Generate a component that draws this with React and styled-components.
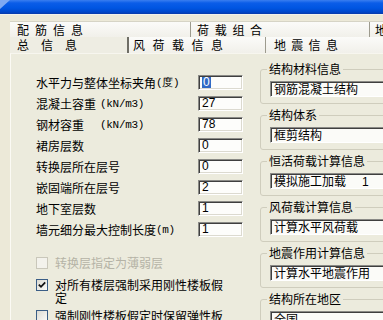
import React from 'react';
import styled, { createGlobalStyle } from 'styled-components';

const Global = createGlobalStyle`
  html, body { margin: 0; padding: 0; background: #ece9d8; overflow: hidden; }
  body {
    font-family: "Noto Sans CJK SC", "Noto Sans", sans-serif;
    font-size: 12px;
    color: #000;
  }
  * { box-sizing: border-box; }
`;

const Window = styled.div`
  width: 383px;
  height: 320px;
  overflow: hidden;
  display: flex;
  flex-direction: column;
  background: #ece9d8;
`;

const TitleBar = styled.div`
  flex: none;
  height: 15px;
  position: relative;
  background: linear-gradient(#3a7ef0 0, #0b5de8 3px, #0055e2 8px, #0047ca 12px, #0a3aa8 14px);
  border-bottom: 1px solid #f4f2ea;
  &::before {
    content: "";
    position: absolute;
    left: 0;
    top: 0;
    width: 10px;
    height: 9px;
    background: #7fa9f2;
    clip-path: polygon(0 0, 100% 0, 0 100%);
  }
`;

const Body = styled.div`
  flex: 1;
  min-height: 0;
  display: flex;
  flex-direction: column;
  padding: 6px 0 0 10px;
`;

const TabRow = styled.div`
  flex: none;
  display: flex;
  height: 16px;
  background: linear-gradient(#fbfbf9, #f1f0ea);
  border-top: ${p => (p.$top ? '1px solid #d6d4c6' : 'none')};
`;

const Tab = styled.div`
  flex: ${p => (p.$w ? 'none' : '1')};
  width: ${p => (p.$w ? `${p.$w}px` : 'auto')};
  padding-left: ${p => p.$pad}px;
  letter-spacing: ${p => p.$ls}px;
  line-height: 16px;
  white-space: nowrap;
  overflow: hidden;
  border-right: ${p => (p.$strong ? '2px solid #6f6e66' : '1px solid #9d9b8e')};
  background: ${p => (p.$active ? '#eeede3' : 'transparent')};
  &:last-child { border-right: none; }
`;

const Panel = styled.div`
  flex: 1;
  min-height: 0;
  display: flex;
  background: #ecebdd;
  border-left: 1px solid #fbfaf4;
  border-top: 1px solid #f7f6ef;
`;

const LeftCol = styled.div`
  flex: none;
  display: flex;
  flex-direction: column;
  padding: 21px 0 0 25px;
`;

const FormGrid = styled.div`
  display: grid;
  grid-template-columns: 162px 45px;
  grid-auto-rows: 21px;
`;

const Label = styled.div`
  display: flex;
  align-items: center;
  height: 15px;
  white-space: nowrap;
`;

const Name = styled.span`
  display: inline-block;
  min-width: ${p => (p.$min ? `${p.$min}px` : '0')};
`;

const Unit = styled.span`
  font-family: "Liberation Mono", monospace;
  font-size: 11px;
  letter-spacing: -0.3px;
`;

const Input = styled.div`
  height: 15px;
  background: #fdfdfb;
  border: 1px solid;
  border-color: #8a8a86 #ffffff #ffffff #8a8a86;
  box-shadow: inset 1px 1px 0 #3f3f3f, inset -1px -1px 0 #dcdad0;
  font-family: "Liberation Sans", Arial, sans-serif;
  font-size: 12px;
  line-height: 13px;
  padding-left: 3px;
`;

const Selected = styled.span`
  display: inline-block;
  background: #316ac5;
  color: #fff;
  padding: 0 1px;
  line-height: 11px;
  margin-top: 1px;
`;

const Checks = styled.div`
  margin-top: 8px;
  display: flex;
  flex-direction: column;
`;

const CheckRow = styled.div`
  display: flex;
  align-items: flex-start;
  min-height: 22px;
  padding-top: 5px;
  gap: 7px;
  color: ${p => (p.$disabled ? '#b5b3a6' : '#000')};
`;

const Box = styled.span`
  flex: none;
  width: 12px;
  height: 12px;
  margin-top: 1px;
  border: 1px solid ${p => (p.$disabled ? '#c9c7ba' : '#3b5e86')};
  background: ${p => (p.$disabled ? '#f3f2ec' : 'linear-gradient(135deg, #dcdbd3, #fbfbf8)')};
  display: flex;
  align-items: center;
  justify-content: center;
`;

const CheckText = styled.span`
  width: 172px;
  line-height: 13px;
`;

const RightCol = styled.div`
  flex: none;
  width: 160px;
  margin-left: 17px;
  padding-top: 9px;
  display: flex;
  flex-direction: column;
  gap: 5px;
`;

const Group = styled.fieldset`
  margin: 0;
  padding: 0 0 6px 9px;
  border: 1px solid #cfcdbd;
  border-radius: 3px;
  min-width: 0;
`;

const Legend = styled.legend`
  padding: 0 2px;
  margin-left: -3px;
  line-height: 12px;
  height: 12px;
  white-space: nowrap;
`;

const Field = styled.div`
  margin-top: 6px;
  height: 16px;
  background: #fbfbf8;
  border: 1px solid;
  border-color: #8a8a86 #ffffff #ffffff #8a8a86;
  box-shadow: inset 1px 1px 0 #3f3f3f;
  padding-left: 3px;
  line-height: 14px;
  white-space: nowrap;
  overflow: hidden;
`;

const Extra = styled.span`
  margin-left: 16px;
  font-family: "Liberation Sans", Arial, sans-serif;
`;

const Tick = () => (
  <svg width="8" height="8" viewBox="0 0 8 8">
    <path d="M0.8 3.6 L3 5.8 L7.2 1.4" fill="none" stroke="#111" strokeWidth="1.8" />
  </svg>
);

const rows = [
  { name: '水平力与整体坐标夹角', unit: '(度)', value: '0', sel: true },
  { name: '混凝土容重', unit: '(kN/m3)', value: '27', min: 64 },
  { name: '钢材容重', unit: '(kN/m3)', value: '78', min: 64 },
  { name: '裙房层数', value: '0' },
  { name: '转换层所在层号', value: '0' },
  { name: '嵌固端所在层号', value: '2' },
  { name: '地下室层数', value: '1' },
  { name: '墙元细分最大控制长度', unit: '(m)', value: '1' },
];

const groups = [
  { title: '结构材料信息', value: '钢筋混凝土结构' },
  { title: '结构体系', value: '框剪结构' },
  { title: '恒活荷载计算信息', value: '模拟施工加载', extra: '1' },
  { title: '风荷载计算信息', value: '计算水平风荷载' },
  { title: '地震作用计算信息', value: '计算水平地震作用' },
  { title: '结构所在地区', value: '全国' },
];

export default function App() {
  return (
    <Window>
      <Global />
      <TitleBar />
      <Body>
        <TabRow $top>
          <Tab $w={181} $pad={7} $ls={6}>配筋信息</Tab>
          <Tab $w={179} $pad={6} $ls={5.7}>荷载组合</Tab>
          <Tab $pad={5} $ls={6}>地震信息</Tab>
        </TabRow>
        <TabRow>
          <Tab $w={119} $pad={7} $ls={12} $strong $active>总信息</Tab>
          <Tab $w={137} $pad={4} $ls={7.5}>风荷载信息</Tab>
          <Tab $pad={8} $ls={5.3}>地震信息</Tab>
        </TabRow>
        <Panel>
          <LeftCol>
            <FormGrid>
              {rows.map(r => (
                <React.Fragment key={r.name}>
                  <Label>
                    <Name $min={r.min}>{r.name}</Name>
                    {r.unit && <Unit>{r.unit}</Unit>}
                  </Label>
                  <Input>{r.sel ? <Selected>{r.value}</Selected> : r.value}</Input>
                </React.Fragment>
              ))}
            </FormGrid>
            <Checks>
              <CheckRow $disabled>
                <Box $disabled />
                <CheckText>转换层指定为薄弱层</CheckText>
              </CheckRow>
              <CheckRow>
                <Box><Tick /></Box>
                <CheckText>对所有楼层强制采用刚性楼板假定</CheckText>
              </CheckRow>
              <CheckRow>
                <Box />
                <CheckText>强制刚性楼板假定时保留弹性板面外刚度</CheckText>
              </CheckRow>
            </Checks>
          </LeftCol>
          <RightCol>
            {groups.map(g => (
              <Group key={g.title}>
                <Legend>{g.title}</Legend>
                <Field>
                  {g.value}
                  {g.extra && <Extra>{g.extra}</Extra>}
                </Field>
              </Group>
            ))}
          </RightCol>
        </Panel>
      </Body>
    </Window>
  );
}
